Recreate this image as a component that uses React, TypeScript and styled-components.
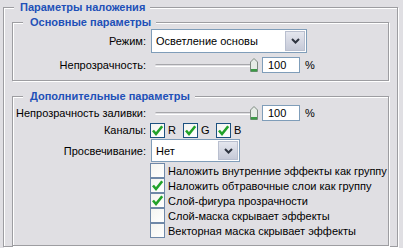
import React from 'react';
import styled, { createGlobalStyle } from 'styled-components';

const BG = '#e0dfe3';

const GlobalStyle = createGlobalStyle`
  body {
    margin: 0;
    background: ${BG};
    font-family: "Liberation Sans", Arial, sans-serif;
    font-size: 11px;
    color: #000;
  }
`;

const Panel = styled.div`
  width: 403px;
  height: 248px;
  overflow: hidden;
  box-sizing: border-box;
  padding: 0 5px 0 3px;
`;

const Group = styled.fieldset<{ $outer?: boolean; $gap?: number }>`
  margin: ${({ $gap }) => ($gap ? `${$gap}px 0 0` : '0')};
  min-width: 0;
  border: 1px solid #9d9da1;
  box-shadow: 1px 1px 0 #fff, inset 1px 1px 0 #fff;
  padding: ${({ $outer }) => ($outer ? '1px 8px 0' : '0')};
`;

const Legend = styled.legend<{ $outer?: boolean }>`
  margin-left: ${({ $outer }) => ($outer ? 2 : 10)}px;
  padding: 0 5px 0 ${({ $outer }) => ($outer ? 6 : 7)}px;
  line-height: 14px;
  font-weight: bold;
  color: #2150b8;
  background: ${BG};
`;

const Form = styled.div<{ $top: number; $bottom: number; $rowGap: number }>`
  display: grid;
  grid-template-columns: 133px 1fr;
  column-gap: 4px;
  row-gap: ${({ $rowGap }) => $rowGap}px;
  align-items: center;
  padding: ${({ $top }) => $top}px 0 ${({ $bottom }) => $bottom}px;
`;

const Label = styled.div`
  text-align: right;
  white-space: nowrap;
`;

const Select = styled.div<{ $width: number; $height: number }>`
  display: flex;
  box-sizing: border-box;
  width: ${({ $width }) => $width}px;
  height: ${({ $height }) => $height}px;
  margin-left: 1px;
  border: 1px solid #7f9db9;
  background: #fff;
`;

const SelectValue = styled.div`
  flex: 1;
  display: flex;
  align-items: center;
  padding-left: 4px;
  white-space: nowrap;
`;

const DropButton = styled.div`
  display: flex;
  align-items: center;
  justify-content: center;
  box-sizing: border-box;
  width: 20px;
  margin: 1px;
  border: 1px solid #b9bfcf;
  background: linear-gradient(#e4e6ee, #c6cad8);
`;

const SliderRow = styled.div`
  display: flex;
  align-items: center;
  height: 16px;
`;

const Track = styled.div`
  position: relative;
  width: 103px;
  height: 16px;
  margin-left: 5px;

  &::before {
    content: '';
    position: absolute;
    left: 0;
    right: 4px;
    top: 7px;
    height: 1px;
    border-top: 1px solid #a7a7ab;
    border-bottom: 1px solid #fff;
    border-radius: 2px;
  }
`;

const Thumb = styled.svg`
  position: absolute;
  right: 0;
  top: 1px;
`;

const NumberBox = styled.input`
  box-sizing: border-box;
  width: 38px;
  height: 16px;
  margin-left: 4px;
  padding: 0 0 0 5px;
  border: 1px solid #7f9db9;
  background: #fff;
  font: inherit;
  color: #000;
  outline: none;
`;

const Unit = styled.span`
  margin-left: 5px;
`;

const Channels = styled.div`
  display: flex;
  height: 16px;
  align-items: center;
`;

const Channel = styled.div`
  display: flex;
  align-items: center;
  width: 33px;
`;

const Box = styled.span<{ $dark?: boolean }>`
  display: flex;
  align-items: center;
  justify-content: center;
  box-sizing: border-box;
  width: 15px;
  height: 15px;
  flex: none;
  border: 1px solid ${({ $dark }) => ($dark ? '#1c5180' : '#6f88a8')};
  background: linear-gradient(135deg, #f4f4f0, #fff);
`;

const BoxText = styled.span`
  margin-left: 3px;
  white-space: nowrap;
`;

const CheckList = styled.div`
  grid-column: 2;
  display: flex;
  flex-direction: column;
`;

const CheckRow = styled.div`
  display: flex;
  align-items: center;
  height: 15px;
`;

function Tick() {
  return (
    <svg width="13" height="13" viewBox="0 0 13 13">
      <path
        d="M2 6.5 L5 10 L11.2 2.3"
        fill="none"
        stroke="#22a22a"
        strokeWidth="2.6"
        strokeLinejoin="miter"
      />
    </svg>
  );
}

function CheckBox({ checked, dark }: { checked: boolean; dark?: boolean }) {
  return <Box $dark={dark}>{checked && <Tick />}</Box>;
}

function Dropdown({ value, width, height }: { value: string; width: number; height: number }) {
  return (
    <Select $width={width} $height={height}>
      <SelectValue>{value}</SelectValue>
      <DropButton>
        <svg width="9" height="6" viewBox="0 0 9 6">
          <path d="M1 1 L4.5 4.5 L8 1" fill="none" stroke="#2e3440" strokeWidth="2" />
        </svg>
      </DropButton>
    </Select>
  );
}

function Slider({ value }: { value: number }) {
  return (
    <SliderRow>
      <Track>
        <Thumb width="8" height="14" viewBox="0 0 8 14">
          <path d="M0.5 13.5 V4 L4 0.5 L7.5 4 V13.5 Z" fill="#e6ece6" stroke="#7d8a80" />
          <rect x="1" y="11" width="6" height="2.5" fill="#3c9a46" />
        </Thumb>
      </Track>
      <NumberBox readOnly value={value} />
      <Unit>%</Unit>
    </SliderRow>
  );
}

const options = [
  { text: 'Наложить внутренние эффекты как группу', checked: false },
  { text: 'Наложить обтравочные слои как группу', checked: true },
  { text: 'Слой-фигура прозрачности', checked: true },
  { text: 'Слой-маска скрывает эффекты', checked: false },
  { text: 'Векторная маска скрывает эффекты', checked: false },
];

export default function App() {
  return (
    <>
      <GlobalStyle />
      <Panel>
        <Group $outer>
          <Legend $outer>Параметры наложения</Legend>

          <Group>
            <Legend>Основные параметры</Legend>
            <Form $top={0} $bottom={7} $rowGap={4}>
              <Label>Режим:</Label>
              <Dropdown value="Осветление основы" width={156} height={24} />
              <Label>Непрозрачность:</Label>
              <Slider value={100} />
            </Form>
          </Group>

          <Group $gap={8}>
            <Legend>Дополнительные параметры</Legend>
            <Form $top={2} $bottom={7} $rowGap={1}>
              <Label>Непрозрачность заливки:</Label>
              <Slider value={100} />
              <Label>Каналы:</Label>
              <Channels>
                {['R', 'G', 'B'].map((c) => (
                  <Channel key={c}>
                    <CheckBox checked dark />
                    <BoxText>{c}</BoxText>
                  </Channel>
                ))}
              </Channels>
              <Label>Просвечивание:</Label>
              <Dropdown value="Нет" width={89} height={23} />
              <CheckList>
                {options.map((o) => (
                  <CheckRow key={o.text}>
                    <CheckBox checked={o.checked} />
                    <BoxText>{o.text}</BoxText>
                  </CheckRow>
                ))}
              </CheckList>
            </Form>
          </Group>
        </Group>
      </Panel>
    </>
  );
}
